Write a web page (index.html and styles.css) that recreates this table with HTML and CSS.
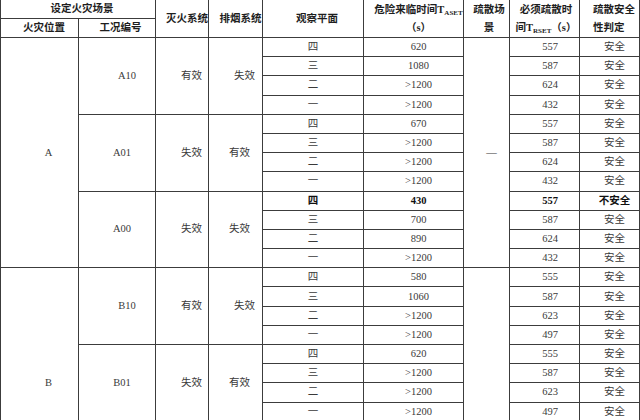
FILE: index.html
```html
<!DOCTYPE html>
<html lang="zh-CN">
<head>
<meta charset="utf-8">
<title>火灾场景疏散安全性判定</title>
<link rel="stylesheet" href="styles.css">
</head>
<body>
<table class="tbl">
  <colgroup>
    <col class="c1"><col class="c2"><col class="c3"><col class="c4"><col class="c5"><col class="c6"><col class="c7"><col class="c8"><col class="c9">
  </colgroup>
  <thead>
    <tr class="h1">
      <th colspan="2" class="hc-scene">设定火灾场景</th>
      <th rowspan="2" class="hc-fire">灭火系统</th>
      <th rowspan="2" class="hc-smoke">排烟系统</th>
      <th rowspan="2" class="hc-plane">观察平面</th>
      <th rowspan="2" class="hc-aset">危险来临时间T<sub>ASET</sub><br>（s）</th>
      <th rowspan="2" class="hc-ev">疏散场<br>景</th>
      <th rowspan="2" class="hc-rset">必须疏散时<br>间T<sub>RSET</sub>（s）</th>
      <th rowspan="2" class="hc-judge">疏散安全<br>性判定</th>
    </tr>
    <tr class="h2">
      <th class="hc-pos">火灾位置</th>
      <th class="hc-case">工况编号</th>
    </tr>
  </thead>
  <tbody>
    <tr>
      <td rowspan="12" class="pos">A</td>
      <td rowspan="4" class="case case-r">A10</td>
      <td rowspan="4" class="fire">有效</td>
      <td rowspan="4" class="smoke smoke-r">失效</td>
      <td class="plane">四</td><td class="aset">620</td>
      <td rowspan="12" class="ev">—</td>
      <td class="rset">557</td><td class="judge">安全</td>
    </tr>
    <tr><td class="plane">三</td><td class="aset">1080</td><td class="rset">587</td><td class="judge">安全</td></tr>
    <tr><td class="plane">二</td><td class="aset">&gt;1200</td><td class="rset">624</td><td class="judge">安全</td></tr>
    <tr><td class="plane">一</td><td class="aset">&gt;1200</td><td class="rset">432</td><td class="judge">安全</td></tr>

    <tr>
      <td rowspan="4" class="case">A01</td>
      <td rowspan="4" class="fire">失效</td>
      <td rowspan="4" class="smoke">有效</td>
      <td class="plane">四</td><td class="aset">670</td><td class="rset">557</td><td class="judge">安全</td>
    </tr>
    <tr><td class="plane">三</td><td class="aset">&gt;1200</td><td class="rset">587</td><td class="judge">安全</td></tr>
    <tr><td class="plane">二</td><td class="aset">&gt;1200</td><td class="rset">624</td><td class="judge">安全</td></tr>
    <tr><td class="plane">一</td><td class="aset">&gt;1200</td><td class="rset">432</td><td class="judge">安全</td></tr>

    <tr class="warn">
      <td rowspan="4" class="case">A00</td>
      <td rowspan="4" class="fire">失效</td>
      <td rowspan="4" class="smoke">失效</td>
      <td class="plane">四</td><td class="aset">430</td><td class="rset">557</td><td class="judge">不安全</td>
    </tr>
    <tr><td class="plane">三</td><td class="aset">700</td><td class="rset">587</td><td class="judge">安全</td></tr>
    <tr><td class="plane">二</td><td class="aset">890</td><td class="rset">624</td><td class="judge">安全</td></tr>
    <tr><td class="plane">一</td><td class="aset">&gt;1200</td><td class="rset">432</td><td class="judge">安全</td></tr>

    <tr>
      <td rowspan="12" class="pos">B</td>
      <td rowspan="4" class="case case-r">B10</td>
      <td rowspan="4" class="fire">有效</td>
      <td rowspan="4" class="smoke smoke-r">失效</td>
      <td class="plane">四</td><td class="aset">580</td>
      <td rowspan="12" class="ev"></td>
      <td class="rset">555</td><td class="judge">安全</td>
    </tr>
    <tr><td class="plane">三</td><td class="aset">1060</td><td class="rset">587</td><td class="judge">安全</td></tr>
    <tr><td class="plane">二</td><td class="aset">&gt;1200</td><td class="rset">623</td><td class="judge">安全</td></tr>
    <tr><td class="plane">一</td><td class="aset">&gt;1200</td><td class="rset">497</td><td class="judge">安全</td></tr>

    <tr>
      <td rowspan="4" class="case">B01</td>
      <td rowspan="4" class="fire">失效</td>
      <td rowspan="4" class="smoke">有效</td>
      <td class="plane">四</td><td class="aset">620</td><td class="rset">555</td><td class="judge">安全</td>
    </tr>
    <tr><td class="plane">三</td><td class="aset">&gt;1200</td><td class="rset">587</td><td class="judge">安全</td></tr>
    <tr><td class="plane">二</td><td class="aset">&gt;1200</td><td class="rset">623</td><td class="judge">安全</td></tr>
    <tr><td class="plane">一</td><td class="aset">&gt;1200</td><td class="rset">497</td><td class="judge">安全</td></tr>

    <tr>
      <td rowspan="4" class="case"></td>
      <td rowspan="4" class="fire"></td>
      <td rowspan="4" class="smoke"></td>
      <td class="plane"></td><td class="aset"></td><td class="rset"></td><td class="judge"></td>
    </tr>
    <tr><td class="plane"></td><td class="aset"></td><td class="rset"></td><td class="judge"></td></tr>
    <tr><td class="plane"></td><td class="aset"></td><td class="rset"></td><td class="judge"></td></tr>
    <tr><td class="plane"></td><td class="aset"></td><td class="rset"></td><td class="judge"></td></tr>
  </tbody>
</table>
</body>
</html>
```

FILE: styles.css
```css
html, body {
  margin: 0;
  padding: 0;
  background: #ffffff;
}

.tbl {
  border-collapse: collapse;
  table-layout: fixed;
  width: 639px;
  margin-top: -1px;
  font-family: "Liberation Serif", "Noto Sans CJK SC", serif;
  font-size: 10.5px;
  color: #3a3a3a;
}

.c1 { width: 78px; }
.c2 { width: 77px; }
.c3 { width: 53px; }
.c4 { width: 54px; }
.c5 { width: 101px; }
.c6 { width: 100px; }
.c7 { width: 46px; }
.c8 { width: 70px; }
.c9 { width: 60px; }

th,
td {
  border: 1px solid #3c3c3c;
  padding: 0;
  text-align: center;
  vertical-align: middle;
  white-space: nowrap;
  overflow: hidden;
}

th {
  font-weight: 700;
  color: #1e1e1e;
  line-height: 18px;
}

sub {
  font-size: 7px;
  vertical-align: -2px;
  line-height: 0;
}

.h1 { height: 18px; }
.h2 { height: 19px; }

tbody tr { height: 19.2px; }
tbody td { line-height: 14px; }

.hc-scene { padding-left: 8px; }
.hc-pos { padding-left: 9px; }
.hc-case { padding-left: 7px; }
.hc-fire { padding-left: 10px; }
.hc-smoke { padding-left: 10px; }
.hc-plane { padding-left: 8px; }
.hc-aset { padding-left: 10px; }
.hc-ev { padding-left: 5px; }
.hc-rset { padding-left: 3px; }
.hc-judge { text-align: left; padding-left: 13px; }

.pos { padding-left: 18px; }
.case { padding-left: 10px; }
.case-r { padding-left: 20px; }
.fire { padding-left: 19px; }
.smoke { padding-left: 8px; }
.smoke-r { padding-left: 18px; }
.aset { padding-left: 10px; }
.ev { padding-left: 10px; }
.rset { padding-left: 11px; }
.judge { padding-left: 10px; }

.warn .plane,
.warn .aset,
.warn .rset,
.warn .judge {
  font-weight: 700;
  color: #111;
}
```
